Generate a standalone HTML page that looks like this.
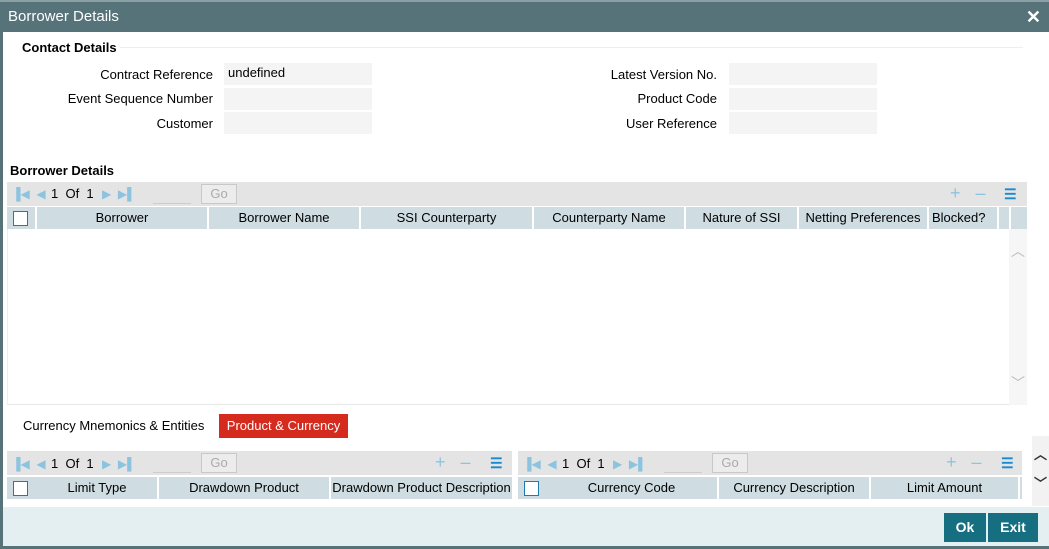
<!DOCTYPE html>
<html><head><style>
*{box-sizing:border-box;margin:0;padding:0}
body{width:1049px;height:549px;overflow:hidden;background:#fff;font-family:"Liberation Sans",Arial,sans-serif;font-size:13px;color:#000;position:relative}
.a{position:absolute}
.title{left:0;top:0;width:1049px;height:32px;background:#56737a;border-top:2px solid #8aa0a5;color:#fff;font-size:15px;line-height:30px;padding-left:8px}
.lbl{text-align:right;width:200px}
.inp{background:#f4f4f4;height:22px;width:148px;padding-left:4px;line-height:20px}
.bar{background:#e4e4e4;height:24px}
.hdr{background:#cfdde2;height:22px}
.hc{position:absolute;top:0;height:22px;line-height:22px;text-align:center;border-right:2px solid #fff}
.cb{position:absolute;width:15px;height:15px;border:1.5px solid #1a7cb0;background:#fff}
.nav{color:#8cc4e0;font-size:12px}
.go{border:1px solid #c8c8c8;background:#ececec;color:#aaa;width:36px;height:20px;text-align:center;line-height:18px}
.ic{color:#8cc4e0;font-size:18px}
</style></head><body>
<div class="a" style="left:0;top:0;width:3px;height:549px;background:#56737a"></div>
<div class="a title">Borrower Details<span style="position:absolute;right:8px;top:0;font-size:18px;font-weight:bold">✕</span></div>
<div class="a" style="left:22px;top:40px;font-weight:bold">Contact Details</div>
<div class="a" style="left:120px;top:47px;width:903px;height:1px;background:#eee"></div>

<div class="a lbl" style="left:13px;top:67px">Contract Reference</div>
<div class="a inp" style="left:224px;top:63px">undefined</div>
<div class="a lbl" style="left:13px;top:91px">Event Sequence Number</div>
<div class="a inp" style="left:224px;top:88px"></div>
<div class="a lbl" style="left:13px;top:116px">Customer</div>
<div class="a inp" style="left:224px;top:112px"></div>
<div class="a lbl" style="left:517px;top:67px">Latest Version No.</div>
<div class="a inp" style="left:729px;top:63px"></div>
<div class="a lbl" style="left:517px;top:91px">Product Code</div>
<div class="a inp" style="left:729px;top:88px"></div>
<div class="a lbl" style="left:517px;top:116px">User Reference</div>
<div class="a inp" style="left:729px;top:112px"></div>

<div class="a" style="left:10px;top:163px;font-weight:bold">Borrower Details</div>
<div class="a bar" style="left:7px;top:182px;width:1020px"></div>
<div class="a nav" style="left:12px;top:187px">▐◀ &nbsp;◀</div>
<div class="a" style="left:51px;top:186px">1 &nbsp;Of &nbsp;1</div>
<div class="a nav" style="left:102px;top:187px">▶ &nbsp;▶▌</div>
<div class="a" style="left:153px;top:203px;width:38px;height:1px;background:#ccc"></div>
<div class="a go" style="left:201px;top:184px">Go</div>
<div class="a ic" style="left:950px;top:183px">+ &nbsp;&nbsp;–</div>
<div class="a" style="left:1004px;top:186px;color:#1a8ad0;font-weight:bold;font-size:14px">☰</div>
<div class="a hdr" style="left:7px;top:207px;width:1020px">
<div class="cb" style="left:6px;top:4px"></div>
<div class="hc" style="left:28px;width:2px;background:#fff"></div>
<div class="hc" style="left:30px;width:172px">Borrower</div>
<div class="hc" style="left:202px;width:152px">Borrower Name</div>
<div class="hc" style="left:354px;width:173px">SSI Counterparty</div>
<div class="hc" style="left:527px;width:152px">Counterparty Name</div>
<div class="hc" style="left:679px;width:113px">Nature of SSI</div>
<div class="hc" style="left:792px;width:130px">Netting Preferences</div>
<div class="hc" style="left:922px;width:70px;text-align:left;padding-left:3px">Blocked?</div>
<div class="hc" style="left:992px;width:12px"></div>
</div>
<div class="a" style="left:7px;top:229px;width:1020px;height:176px;border-left:1px solid #eee;border-bottom:1px solid #e8e8e8"></div>
<div class="a" style="left:1009px;top:229px;width:18px;height:176px;background:#f6f6f6;color:#bbb;font-size:14px;text-align:center"><div style="margin-top:12px">︿</div><div style="margin-top:112px">﹀</div></div>

<div class="a" style="left:23px;top:418px">Currency Mnemonics &amp; Entities</div>
<div class="a" style="left:219px;top:414px;width:129px;height:24px;background:#d52b1e;color:#fff;line-height:23px;text-align:center">Product &amp; Currency</div>

<div class="a" style="left:3px;top:507px;width:1046px;height:40px;background:#e4eff2"></div>
<div class="a bar" style="left:7px;top:451px;width:505px"></div>
<div class="a nav" style="left:12px;top:457px">▐◀ &nbsp;◀</div>
<div class="a" style="left:51px;top:456px">1 &nbsp;Of &nbsp;1</div>
<div class="a nav" style="left:102px;top:457px">▶ &nbsp;▶▌</div>
<div class="a" style="left:153px;top:472px;width:38px;height:1px;background:#ccc"></div>
<div class="a go" style="left:201px;top:453px">Go</div>
<div class="a ic" style="left:435px;top:452px">+ &nbsp;&nbsp;–</div>
<div class="a" style="left:490px;top:455px;color:#1a8ad0;font-weight:bold;font-size:14px">☰</div>
<div class="a hdr" style="left:7px;top:477px;width:505px">
<div class="cb" style="left:6px;top:4px"></div>
<div class="hc" style="left:30px;width:122px">Limit Type</div>
<div class="hc" style="left:152px;width:172px">Drawdown Product</div>
<div class="hc" style="left:324px;width:181px;border:0">Drawdown Product Description</div>
</div>
<div class="a bar" style="left:518px;top:451px;width:504px"></div>
<div class="a nav" style="left:523px;top:457px">▐◀ &nbsp;◀</div>
<div class="a" style="left:562px;top:456px">1 &nbsp;Of &nbsp;1</div>
<div class="a nav" style="left:613px;top:457px">▶ &nbsp;▶▌</div>
<div class="a" style="left:664px;top:472px;width:38px;height:1px;background:#ccc"></div>
<div class="a go" style="left:712px;top:453px">Go</div>
<div class="a ic" style="left:946px;top:452px">+ &nbsp;&nbsp;–</div>
<div class="a" style="left:1001px;top:455px;color:#1a8ad0;font-weight:bold;font-size:14px">☰</div>
<div class="a hdr" style="left:518px;top:477px;width:504px">
<div class="cb" style="left:6px;top:4px"></div>
<div class="hc" style="left:28px;width:173px">Currency Code</div>
<div class="hc" style="left:201px;width:152px">Currency Description</div>
<div class="hc" style="left:353px;width:149px">Limit Amount</div>
</div>
<div class="a" style="left:1032px;top:436px;width:17px;height:70px;background:#f2f2f2;text-align:center;font-weight:bold;font-size:13px;color:#333"><div style="margin-top:8px">︿</div><div style="margin-top:10px">﹀</div></div>
<div class="a" style="left:944px;top:513px;width:42px;height:29px;background:#156f80;color:#fff;font-weight:bold;font-size:14px;line-height:29px;text-align:center">Ok</div>
<div class="a" style="left:988px;top:513px;width:50px;height:29px;background:#156f80;color:#fff;font-weight:bold;font-size:14px;line-height:29px;text-align:center">Exit</div>
<div class="a" style="left:0;top:546px;width:1049px;height:3px;background:#56737a"></div>
</body></html>
